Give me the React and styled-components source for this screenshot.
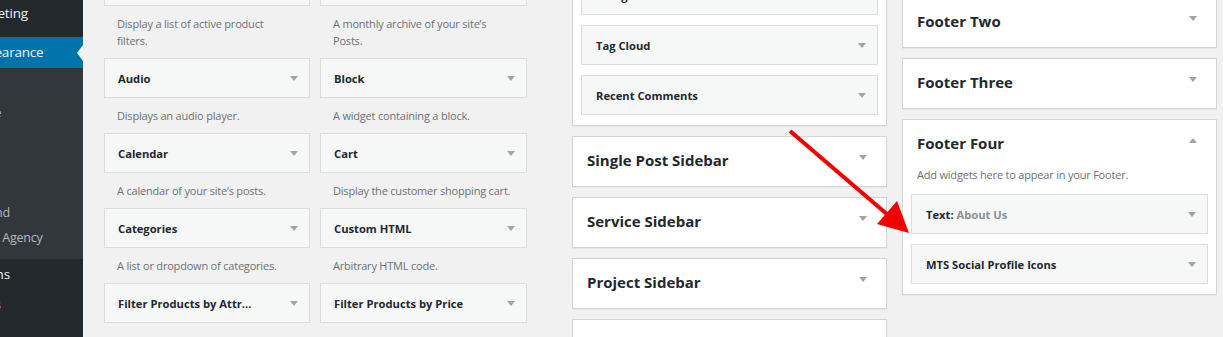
import React from "react";
import styled, { createGlobalStyle } from "styled-components";

const GlobalStyle = createGlobalStyle`
  html, body {
    margin: 0;
    padding: 0;
  }
  body {
    background: #f1f1f1;
    font-family: "Open Sans", "Noto Sans", sans-serif;
    color: #23282d;
    overflow: hidden;
  }
`;

const Page = styled.div`
  position: relative;
  display: flex;
  width: 1223px;
  height: 337px;
  overflow: hidden;
`;

/* ---------- admin menu ---------- */

const Sidebar = styled.nav`
  flex: none;
  width: 83px;
  height: 100%;
  background: #23282d;
  overflow: hidden;
`;

const MenuList = styled.ul`
  list-style: none;
  margin: -2px 0 0 -77px;
  padding: 0;
  width: 160px;
`;

const MenuItem = styled.li`
  position: relative;
  height: ${(p) => (p.$current ? 31 : 30)}px;
  line-height: ${(p) => (p.$current ? 31 : 30)}px;
  padding-left: ${(p) => (p.$current ? 47 : 43)}px;
  font-size: 13.5px;
  letter-spacing: -0.2px;
  white-space: nowrap;
  color: #f0f0f1;
  background: ${(p) => (p.$current ? "#0073aa" : "transparent")};

  &::after {
    content: "";
    display: ${(p) => (p.$current ? "block" : "none")};
    position: absolute;
    right: 0;
    top: 50%;
    margin-top: -8px;
    border-top: 8px solid transparent;
    border-bottom: 8px solid transparent;
    border-right: 6px solid #f1f1f1;
  }
`;

const Separator = styled.li`
  height: 9px;
`;

const SubMenu = styled.ul`
  list-style: none;
  margin: 0;
  padding: 7px 0 9px;
  background: #32373c;
`;

const SubItem = styled.li`
  height: 25px;
  line-height: 25px;
  padding-left: 19px;
  font-size: 12.5px;
  letter-spacing: -0.2px;
  white-space: nowrap;
  color: ${(p) => (p.$current ? "#fff" : "#b4b9be")};
  font-weight: ${(p) => (p.$current ? 600 : 400)};
`;

/* ---------- main area ---------- */

const Main = styled.main`
  flex: 1;
  display: flex;
  align-items: flex-start;
  padding-left: 21px;
`;

const WidgetGrid = styled.div`
  display: grid;
  grid-template-columns: 206px 207px;
  column-gap: 10px;
  margin-top: -34px;
`;

const WidgetCell = styled.div`
  display: flex;
  flex-direction: column;
`;

const Caret = styled.span`
  flex: none;
  width: 0;
  height: 0;
  border-left: 4px solid transparent;
  border-right: 4px solid transparent;
  ${(p) =>
    p.$up
      ? "border-bottom: 5px solid #a0a5aa;"
      : "border-top: 5px solid #a0a5aa;"}
`;

const WidgetBar = styled.div`
  display: flex;
  align-items: center;
  justify-content: space-between;
  height: 38px;
  padding: 0 11px 0 13px;
  background: #f6f7f7;
  border: 1px solid #dcdcde;
  font-size: 11.2px;
  font-weight: 700;
  color: #23282d;
  white-space: nowrap;
`;

const WidgetDesc = styled.p`
  margin: 0;
  padding: 9px 15px 9px 13px;
  font-size: 11px;
  letter-spacing: -0.2px;
  line-height: 17px;
  color: #6c7176;
`;

const Column = styled.div`
  flex: none;
  width: 315px;
  display: flex;
  flex-direction: column;
  gap: 10px;
  margin-left: ${(p) => p.$left}px;
  margin-top: ${(p) => p.$top}px;
`;

const Panel = styled.section`
  background: #fff;
  border: 1px solid #d3d6d9;
  box-shadow: 0 1px 1px rgba(0, 0, 0, 0.04);
`;

const PanelHeader = styled.div`
  display: flex;
  align-items: center;
  justify-content: space-between;
  box-sizing: border-box;
  height: 49px;
  padding: 0 19px 3px 14px;
  font-size: 15px;
  font-weight: 700;
  color: #23282d;

  ${Caret} {
    margin-bottom: 5px;
  }
`;

const PanelDesc = styled.p`
  margin: -3px 0 0;
  padding: 0 14px;
  font-size: 11px;
  letter-spacing: -0.2px;
  line-height: 17px;
  color: #6c7176;
`;

const PanelBody = styled.div`
  display: flex;
  flex-direction: column;
  gap: 10px;
  padding: ${(p) => p.$top}px 8px 10px;
`;

const InnerWidget = styled(WidgetBar)`
  padding: 0 11px 0 14px;
`;

const Muted = styled.span`
  color: #8c8f94;
`;

const ArrowLayer = styled.svg`
  position: absolute;
  left: 0;
  top: 0;
  pointer-events: none;
`;

const available = [
  ["Active Product Filters", "Display a list of active product filters."],
  ["Archives", "A monthly archive of your site’s Posts."],
  ["Audio", "Displays an audio player."],
  ["Block", "A widget containing a block."],
  ["Calendar", "A calendar of your site’s posts."],
  ["Cart", "Display the customer shopping cart."],
  ["Categories", "A list or dropdown of categories."],
  ["Custom HTML", "Arbitrary HTML code."],
  ["Filter Products by Attr...", "Display a list of attributes to filter products in your store."],
  ["Filter Products by Price", "Display a slider to filter products in your store by price."],
];

const submenu = [
  "Themes",
  "Customize",
  "Widgets",
  "Menus",
  "Header",
  "Background",
  "Marketing Agency",
];

const sidebars = ["Single Post Sidebar", "Service Sidebar", "Project Sidebar", "Shop Sidebar"];

export default function App() {
  return (
    <>
      <GlobalStyle />
      <Page>
        <Sidebar>
          <MenuList>
            <MenuItem>Marketing</MenuItem>
            <Separator />
            <MenuItem $current>Appearance</MenuItem>
            <li>
              <SubMenu>
                {submenu.map((s) => (
                  <SubItem key={s} $current={s === "Widgets"}>
                    {s}
                  </SubItem>
                ))}
              </SubMenu>
            </li>
            <MenuItem>Plugins</MenuItem>
            <MenuItem>Users</MenuItem>
            <MenuItem>Tools</MenuItem>
          </MenuList>
        </Sidebar>

        <Main>
          <WidgetGrid>
            {available.map(([title, desc]) => (
              <WidgetCell key={title}>
                <WidgetBar>
                  {title}
                  <Caret />
                </WidgetBar>
                <WidgetDesc>{desc}</WidgetDesc>
              </WidgetCell>
            ))}
          </WidgetGrid>

          <Column $left={45} $top={-36}>
            <Panel>
              <PanelBody $top={10}>
                <InnerWidget>
                  Categories
                  <Caret />
                </InnerWidget>
                <InnerWidget>
                  Tag Cloud
                  <Caret />
                </InnerWidget>
                <InnerWidget>
                  Recent Comments
                  <Caret />
                </InnerWidget>
              </PanelBody>
            </Panel>
            {sidebars.map((s) => (
              <Panel key={s}>
                <PanelHeader>
                  {s}
                  <Caret />
                </PanelHeader>
              </Panel>
            ))}
          </Column>

          <Column $left={15} $top={-3}>
            <Panel>
              <PanelHeader>
                Footer Two
                <Caret />
              </PanelHeader>
            </Panel>
            <Panel>
              <PanelHeader>
                Footer Three
                <Caret />
              </PanelHeader>
            </Panel>
            <Panel>
              <PanelHeader>
                Footer Four
                <Caret $up />
              </PanelHeader>
              <PanelDesc>Add widgets here to appear in your Footer.</PanelDesc>
              <PanelBody $top={11}>
                <InnerWidget>
                  <span>
                    Text: <Muted>About Us</Muted>
                  </span>
                  <Caret />
                </InnerWidget>
                <InnerWidget>
                  MTS Social Profile Icons
                  <Caret />
                </InnerWidget>
              </PanelBody>
            </Panel>
          </Column>
        </Main>

        <ArrowLayer width="1223" height="337" viewBox="0 0 1223 337">
          <line x1="790" y1="131" x2="888" y2="215" stroke="#f20000" strokeWidth="4" />
          <polygon points="909,233 877,224 897,201" fill="#f20000" />
        </ArrowLayer>
      </Page>
    </>
  );
}
